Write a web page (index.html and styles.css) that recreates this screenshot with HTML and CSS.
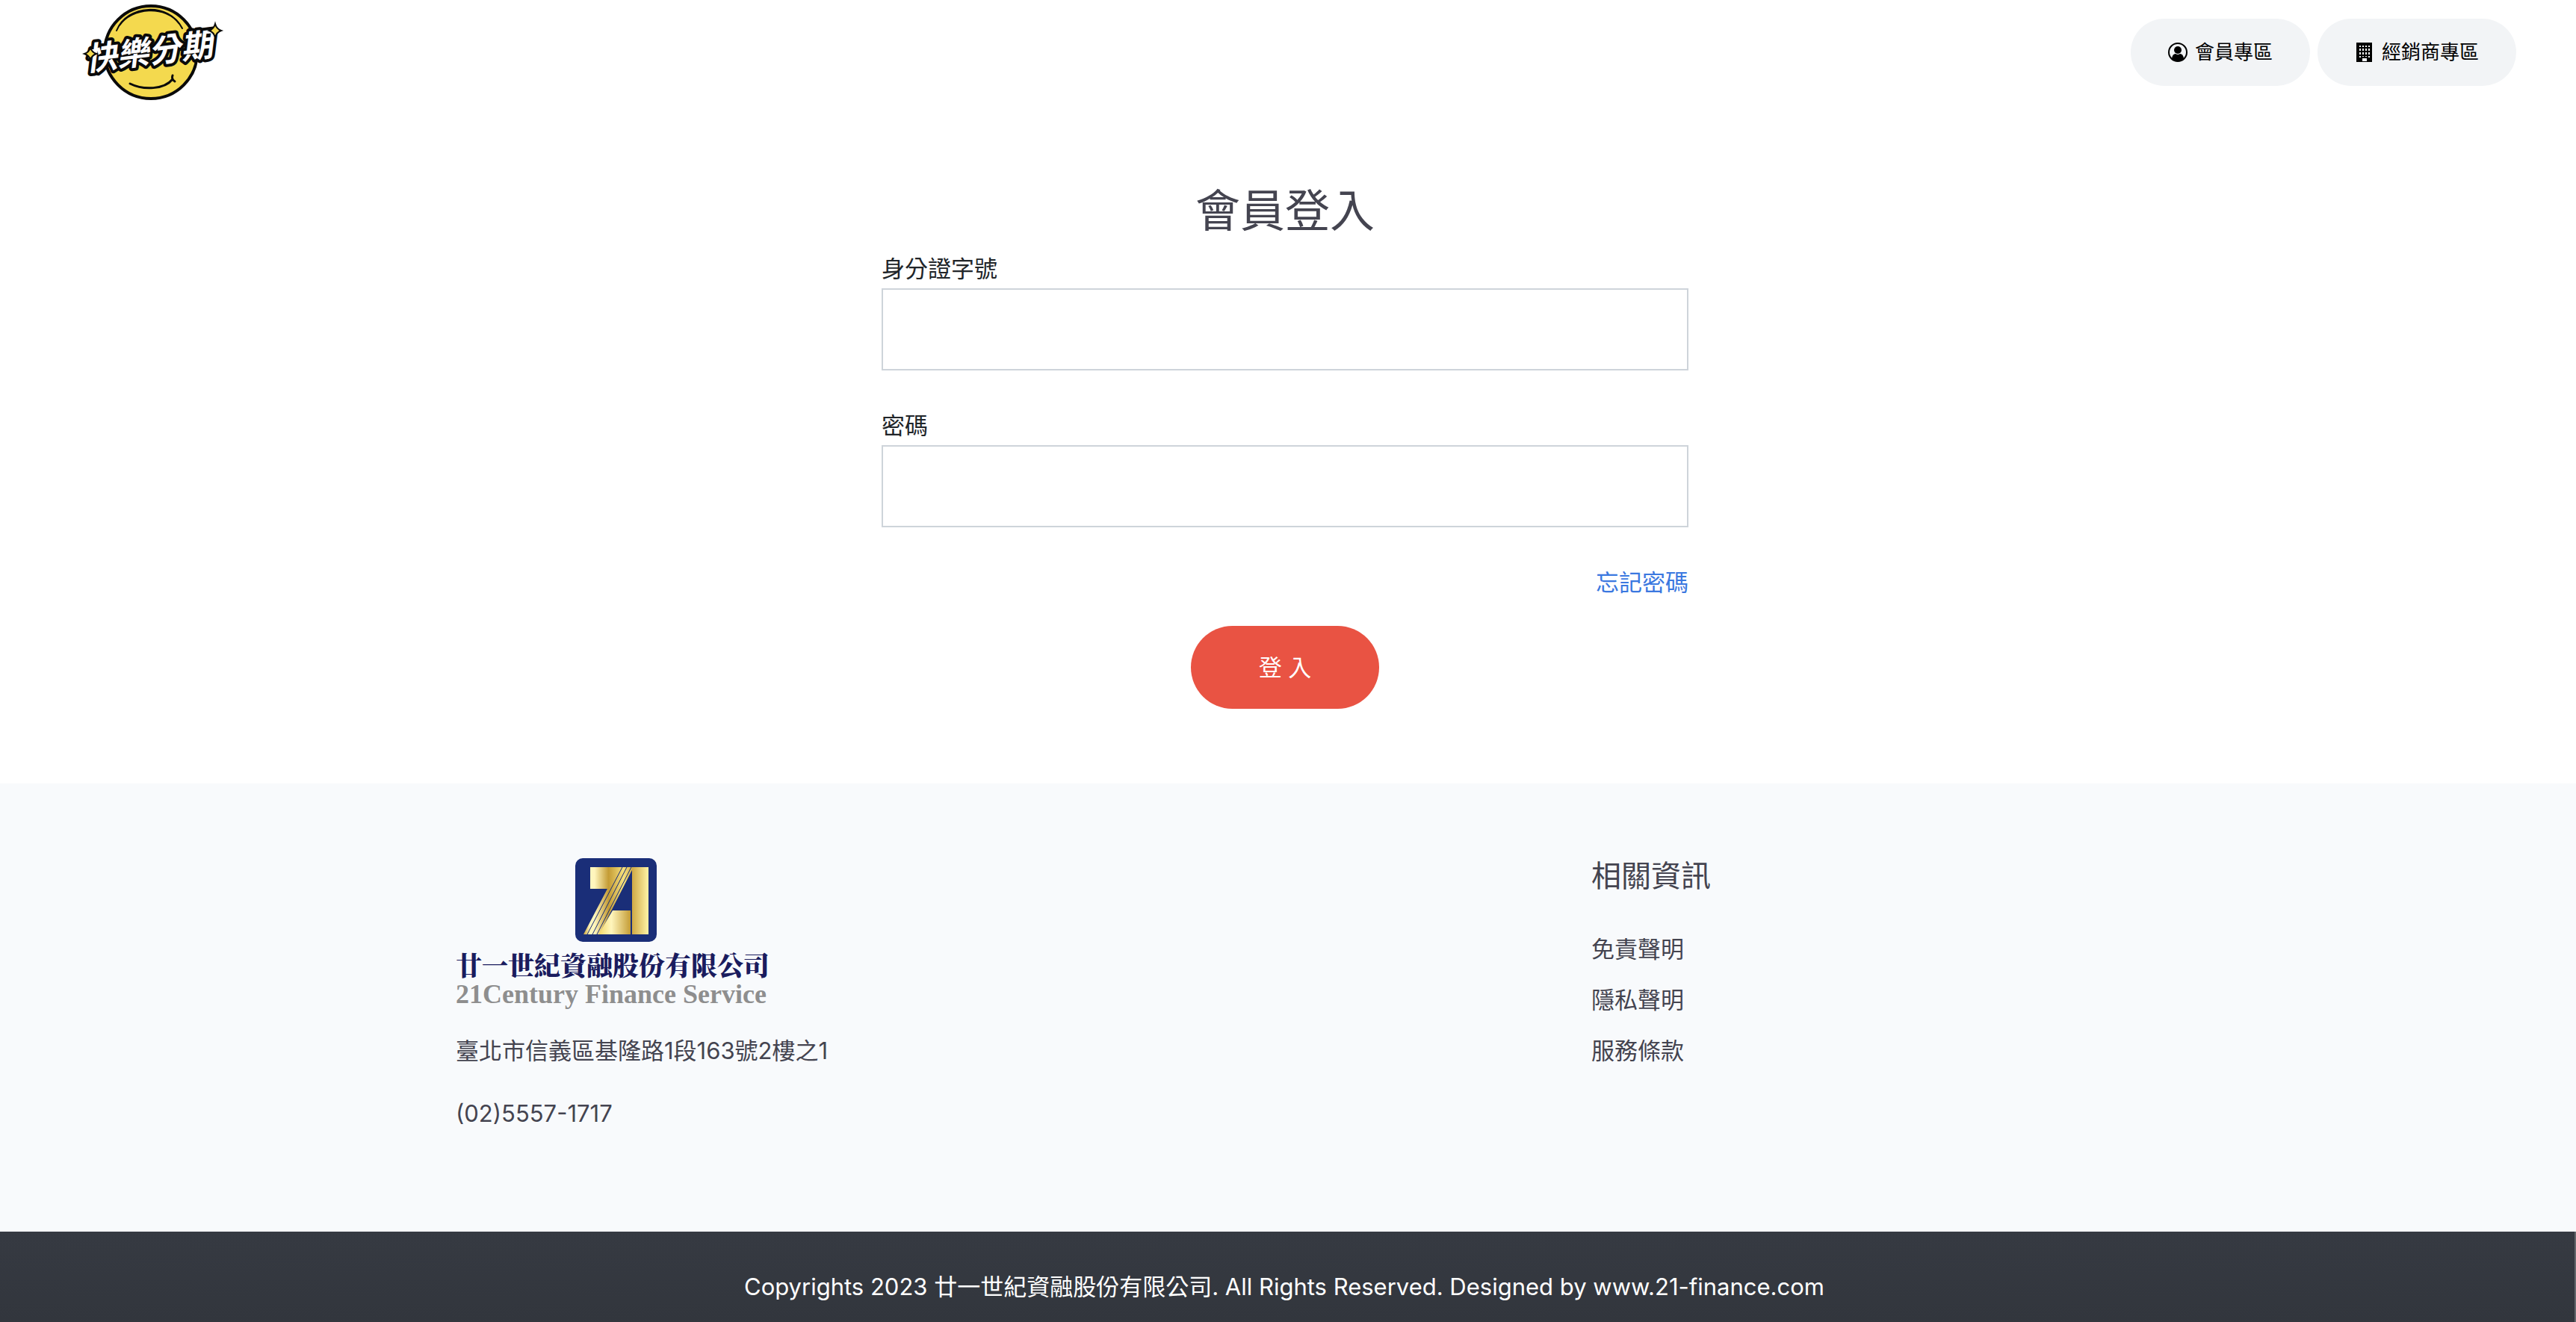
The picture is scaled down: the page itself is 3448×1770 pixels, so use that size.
FILE: index.html
```html
<!DOCTYPE html>
<html lang="zh-Hant">
<head>
<meta charset="utf-8">
<meta name="viewport" content="width=device-width, initial-scale=1">
<title>會員登入</title>
<link rel="stylesheet" href="styles.css">
</head>
<body>
<header class="site-header">
  <a class="brand" href="#" aria-label="快樂分期">
    <svg class="brand-logo" viewBox="0 0 190 140">
      <circle cx="92" cy="70" r="62" fill="#f4d94e" stroke="#0a0a0a" stroke-width="4"/>
      <path d="M46 41C60 6 116 2 134 38M50 34C66 10 112 6 130 32" fill="none" stroke="#0a0a0a" stroke-width="2" stroke-linecap="round"/>
      <path d="M64 112C82 121 110 120 121 106M121 101Q119 106 124 109" fill="none" stroke="#0a0a0a" stroke-width="3" stroke-linecap="round"/>
      <g transform="rotate(-7 95 70)">
        <text class="brand-text" x="3" y="84">快樂分期</text>
      </g>
      <path d="M11 64Q13 70 19 72Q13 74 11 80Q9 74 3 72Q9 70 11 64Z" fill="#f4d94e" stroke="#0a0a0a" stroke-width="2"/>
      <path d="M178 32Q180 39 186 41Q180 43 178 50Q176 43 170 41Q176 39 178 32Z" fill="#f4d94e" stroke="#0a0a0a" stroke-width="2"/>
    </svg>
  </a>
  <nav class="header-nav">
    <a class="pill" href="#">
      <svg class="pill-icon" viewBox="0 0 26 26"><circle cx="13" cy="13" r="12" fill="none" stroke="#000" stroke-width="2"/><circle cx="13" cy="10" r="5"/><path d="M5 21Q6 15 10 15Q13 17 16 15Q20 15 21 21Q18 25 13 25Q8 25 5 21Z"/></svg>
      會員專區
    </a>
    <a class="pill" href="#">
      <svg class="pill-icon" viewBox="0 0 26 26"><path fill-rule="evenodd" d="M2 0h21v26H2zM6 4v2h2V4zm4 0v2h2V4zm4 0v2h2V4zm4 0v2h2V4zM6 8v3h2V8zm4 0v3h2V8zm4 0v3h2V8zm4 0v3h2V8zM6 13v3h2v-3zm4 0v3h2v-3zm4 0v3h2v-3zm4 0v3h2v-3zM6 18v2h2v-2zm4 0v1h2v-1zm4 0v1h2v-1zm4 0v2h2v-2zM10 21v4h6v-4z"/></svg>
      經銷商專區
    </a>
  </nav>
</header>

<main class="login">
  <div class="login-panel">
    <h1 class="login-title">會員登入</h1>
    <form class="login-form">
      <label class="field-label" for="member-id">身分證字號</label>
      <input class="field-input" id="member-id" type="text">
      <label class="field-label" for="member-password">密碼</label>
      <input class="field-input" id="member-password" type="password">
      <a class="forgot" href="#">忘記密碼</a>
      <button class="submit" type="submit">登 入</button>
    </form>
  </div>
</main>

<footer class="site-footer">
  <div class="footer-main">
    <div class="footer-grid">
      <section class="company">
        <svg class="company-logo" viewBox="0 0 426 212">
          <defs>
            <linearGradient id="gold" x1="0" x2="1"><stop offset="0" stop-color="#c9a23c"/><stop offset=".13" stop-color="#fff6bd"/><stop offset=".22" stop-color="#fff6bd"/><stop offset=".5" stop-color="#c49c35"/><stop offset=".8" stop-color="#f6e07c"/><stop offset="1" stop-color="#d0ab48"/></linearGradient>
            <linearGradient id="gold-foot" x1="0" x2="1"><stop offset="0" stop-color="#f3d766"/><stop offset=".4" stop-color="#fff6bd"/><stop offset="1" stop-color="#c49c35"/></linearGradient>
            <linearGradient id="gold-bar" x1="0" x2="1"><stop offset="0" stop-color="#cfa945"/><stop offset="1" stop-color="#fff3a6"/></linearGradient>
          </defs>
          <rect x="160" y="0" width="109" height="112" rx="10" fill="#1a2e78"/>
          <path d="M180 12H238L192 102H171L203 41H180Z" fill="url(#gold)"/>
          <path d="M236 12H258V102H236Z" fill="url(#gold-bar)"/>
          <path d="M210 70H234V102H191Z" fill="url(#gold-foot)"/>
          <path d="M223 12L176 102M229 12L183 102M235 12L189 102" fill="none" stroke="#1a2e78" stroke-width="1"/>
          <text class="logo-cjk" x="0" y="157">廿一世紀資融股份有限公司</text>
          <text class="logo-latin" x="0" y="194">21Century Finance Service</text>
        </svg>
        <p class="company-line">臺北市信義區基隆路1段163號2樓之1</p>
        <p class="company-line">(02)5557-1717</p>
      </section>
      <section class="info">
        <h2 class="info-title">相關資訊</h2>
        <ul class="info-list">
          <li><a href="#">免責聲明</a></li>
          <li><a href="#">隱私聲明</a></li>
          <li><a href="#">服務條款</a></li>
        </ul>
      </section>
    </div>
  </div>
  <div class="copyright">Copyrights 2023 廿一世紀資融股份有限公司. All Rights Reserved. Designed by www.21-finance.com</div>
</footer>
</body>
</html>
```
FILE: styles.css
```css
* { box-sizing: border-box; }

body {
  margin: 0;
  min-height: 100vh;
  display: flex;
  flex-direction: column;
  background: #fff;
  color: #212529;
  font-family: Inter, "Noto Sans CJK TC", sans-serif;
  font-size: 31px;
  font-weight: 400;
  line-height: 44px;
}

a { color: inherit; text-decoration: none; }

.site-header {
  display: flex;
  justify-content: space-between;
  align-items: center;
  height: 140px;
  padding: 0 80px 0 110px;
}
.brand-logo { display: block; width: 190px; height: 140px; }
.brand-text {
  font-family: "Noto Sans CJK TC", sans-serif;
  font-size: 43px;
  font-weight: 700;
  font-style: italic;
  fill: #fff;
  stroke: #0a0a0a;
  stroke-width: 8px;
  stroke-linejoin: round;
  paint-order: stroke;
}
.header-nav { display: flex; gap: 10px; }
.pill {
  display: flex;
  align-items: center;
  gap: 10px;
  height: 90px;
  padding: 0 50px;
  border-radius: 45px;
  background: #f2f4f6;
  color: #000;
  font-size: 26px;
}
.pill-icon { width: 26px; height: 26px; fill: #000; }

.login, .footer-main, .copyright { padding-right: 8px; }

.login-panel {
  width: 100%;
  max-width: 1080px;
  margin: 0 auto;
  padding: 98px 0 100px;
}
.login-title {
  margin: 0 0 12px;
  color: #444450;
  font-size: 60px;
  font-weight: 400;
  line-height: 88px;
  text-align: center;
}
.login-form { display: flex; flex-direction: column; }
.field-label { margin-bottom: 4px; }
.field-input {
  width: 100%;
  height: 110px;
  margin-bottom: 52px;
  padding: 0 24px;
  border: 2px solid #ced4da;
  background: #fff;
  font: inherit;
}
.forgot { align-self: flex-end; color: #3b78e0; }
.submit {
  align-self: center;
  width: 252px;
  height: 111px;
  margin-top: 36px;
  border: 0;
  border-radius: 56px;
  background: #e95343;
  color: #fff;
  font: inherit;
}

.site-footer {
  flex: 1;
  display: flex;
  flex-direction: column;
  background: #f8fafc;
  color: #444450;
}
.footer-grid {
  display: grid;
  grid-template-columns: 2fr 1fr;
  width: 100%;
  max-width: 2280px;
  margin: 0 auto;
  padding: 100px 0 96px;
}
.company, .info { padding: 0 30px; }
.company-logo { display: block; width: 426px; height: 212px; margin-bottom: 24px; }
.logo-cjk { font-family: "Noto Serif CJK TC", "Noto Sans CJK TC", serif; font-size: 35px; font-weight: 900; fill: #1a1c5e; }
.logo-latin { font-family: "Liberation Serif", serif; font-size: 36px; font-weight: 700; fill: #8e8e8e; }
.company-line { margin: 0 0 40px; }
.info-title { margin: 0 0 52px; font-size: 40px; font-weight: 400; line-height: 48px; }
.info-list { display: grid; gap: 24px; margin: 0; padding: 0; list-style: none; }
.copyright {
  flex: 1;
  padding-top: 52px;
  padding-bottom: 24px;
  border-right: 2px solid #62666b;
  background: linear-gradient(#363a42, #32363d);
  color: #fff;
  text-align: center;
}
```
